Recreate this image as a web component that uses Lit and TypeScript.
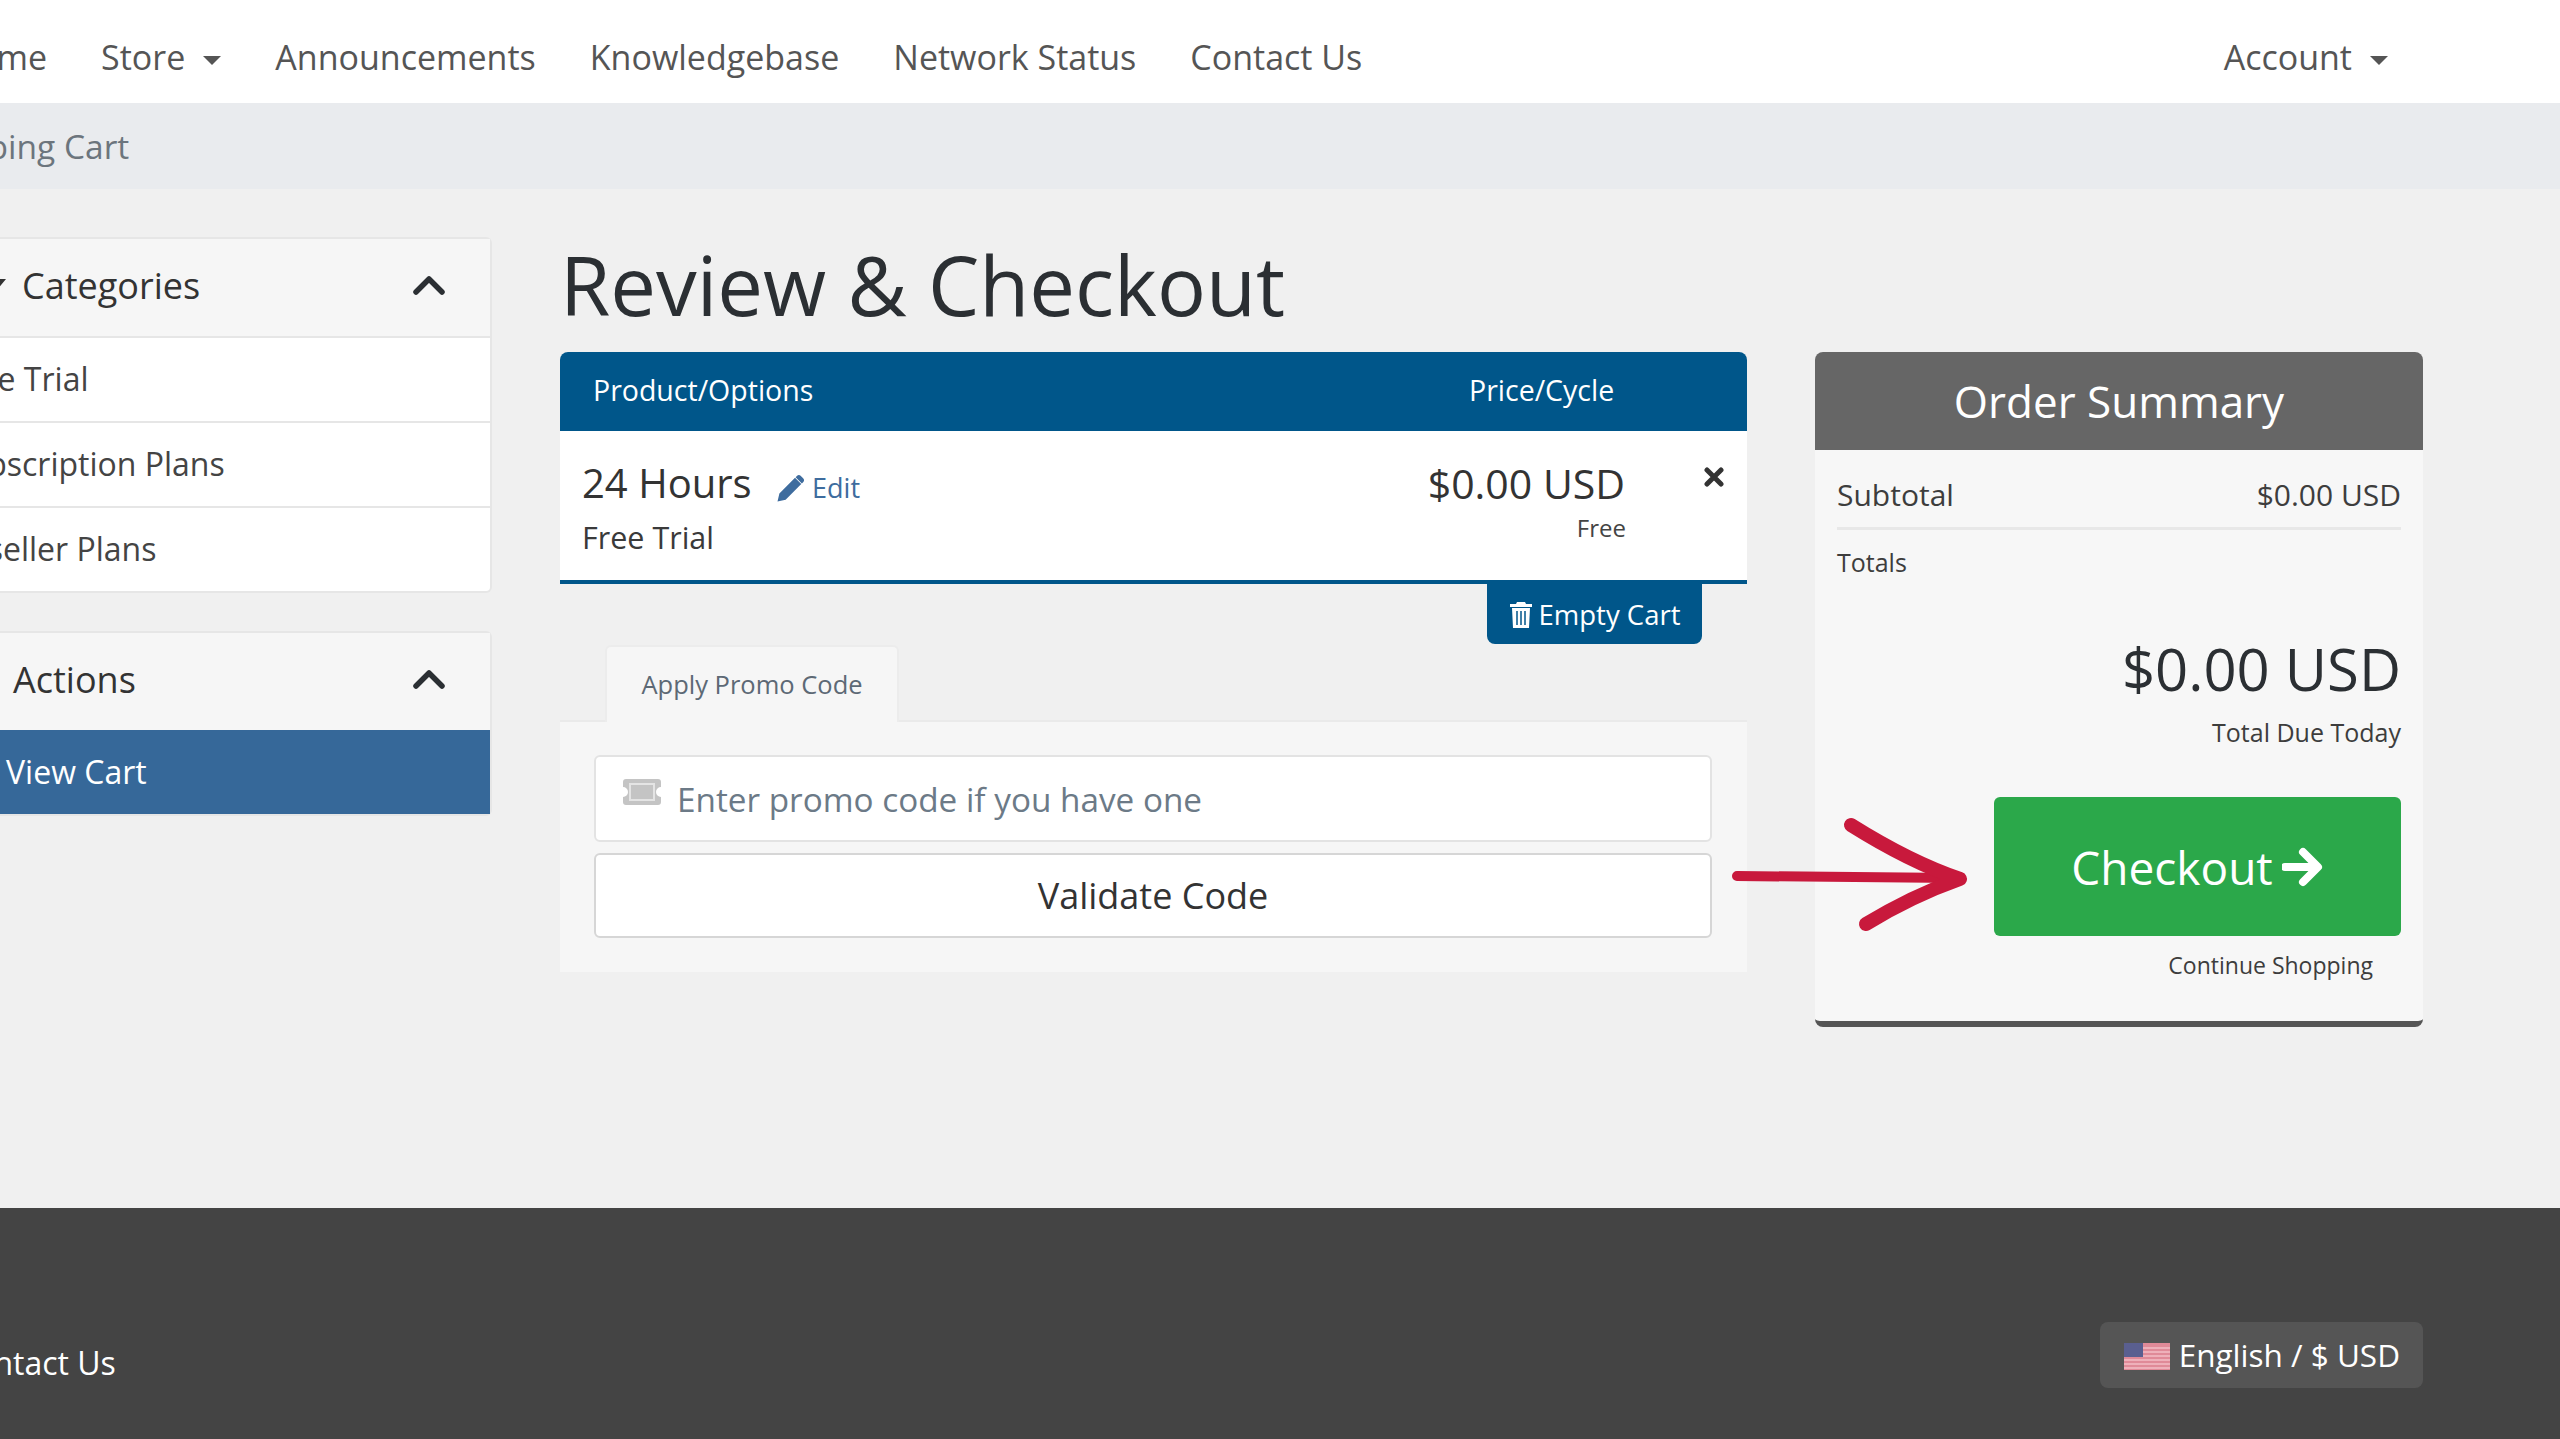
import { LitElement, html, css, svg } from "lit";
import { customElement } from "lit/decorators.js";

const chevron = html`<svg class="chev" viewBox="0 0 34 22"><path d="M4 18 L17 5 L30 18" fill="none" stroke="#2b2f33" stroke-width="5.5" stroke-linecap="round" stroke-linejoin="round"/></svg>`;

@customElement("app-root")
export class AppRoot extends LitElement {
  static styles = css`
    :host { display: block; width: 2560px; height: 1439px; overflow: hidden; background: #f0f0f0; font-family: "Open Sans", "Liberation Sans", sans-serif; color: #333; position: relative; }
    * { box-sizing: border-box; }
    .nav { height: 103px; background: #fff; display: flex; align-items: center; font-size: 34px; color: #555; padding-top: 10px; white-space: nowrap; }
    .nav-left { display: flex; gap: 54px; margin-left: -49px; flex: 1; }
    .nav-right { margin-right: 172px; }
    .caret { display: inline-block; margin-left: 18px; vertical-align: 5px; border-top: 9px solid #555; border-left: 9px solid transparent; border-right: 9px solid transparent; }
    .crumb { height: 86px; background: #e9ebee; display: flex; align-items: center; font-size: 33.5px; color: #6c757d; white-space: nowrap; }
    .crumb span { margin-left: -92px; }
    .content { height: 1019px; padding: 48px 137px 0 0; display: flex; align-items: flex-start; }
    .side { width: 492px; flex: none; margin-right: 68px; overflow: hidden; }
    .card { background: #fff; border: 2px solid #e6e6e6; border-left: none; border-radius: 0 6px 6px 0; margin-bottom: 38px; }
    .card-h { height: 97px; background: #f6f6f6; display: flex; align-items: center; justify-content: space-between; padding: 0 44px 4px 0; font-size: 36px; color: #333; white-space: nowrap; }
    .chev { width: 34px; height: 22px; margin-top: -2px; }
    .row { height: 85px; border-top: 2px solid #e6e6e6; display: flex; align-items: center; font-size: 32px; padding-bottom: 2px; color: #444; white-space: nowrap; }
    .row.active { background: #366899; color: #fff; border-top: none; height: 84px; font-weight: 500; }
    .main { width: 1187px; flex: none; margin-right: 68px; }
    h1 { margin: 0; height: 115px; padding-top: 1px; font-size: 81.5px; line-height: 94px; font-weight: 400; color: #2b2f33; white-space: nowrap; }
    .tbl { background: #fff; border-bottom: 4px solid #00568a; border-radius: 8px 8px 0 0; overflow: hidden; }
    .tbl-h { height: 79px; background: #00568a; color: #fff; display: grid; grid-template-columns: 1fr 278px; align-items: center; font-size: 28.5px; padding-bottom: 4px; }
    .tbl-h span:first-child { padding-left: 33px; }
    .tbl-b { height: 149px; display: grid; grid-template-columns: 1fr auto 122px; padding-left: 22px; }
    .name { padding-top: 27px; font-size: 40px; line-height: 50px; color: #333; }
    .edit { font-size: 27px; color: #3e6c9e; margin-left: 13px; }
    .edit svg { width: 30px; height: 30px; vertical-align: -6px; }
    .sub { font-size: 30.5px; line-height: 42px; margin-top: 3px; color: #3a3a3a; }
    .price { padding-top: 27px; text-align: right; font-size: 41px; line-height: 50px; color: #333; }
    .free { font-size: 24px; line-height: 34px; margin-top: 3px; color: #444; margin-right: -1px; }
    .x { padding-top: 36px; padding-left: 79px; }
    .x svg { width: 20px; height: 20px; display: block; }
    .empty-wrap { display: flex; justify-content: flex-end; padding-right: 45px; }
    .empty { width: 215px; height: 60px; background: #00568a; color: #fff; border-radius: 0 0 8px 8px; font-size: 27.5px; display: flex; align-items: center; justify-content: center; gap: 6px; white-space: nowrap; }
    .empty svg { width: 24px; height: 28px; }
    .tabs { padding: 1px 0 0 45px; height: 78px; border-bottom: 2px solid #eaeaea; }
    .tab { width: 294px; height: 78px; padding-bottom: 2px; background: #f6f6f6; border: 2px solid #ececec; border-bottom: none; border-radius: 6px 6px 0 0; display: flex; align-items: center; justify-content: center; font-size: 25.5px; color: #5d6975; white-space: nowrap; }
    .panel { height: 250px; background: #f6f6f6; padding: 33px 35px 0 34px; }
    .input { height: 87px; background: #fff; border: 2px solid #e3e3e3; border-radius: 6px; display: flex; align-items: center; padding-left: 27px; font-size: 33.3px; color: #6c7a87; white-space: nowrap; }
    .input svg { width: 38px; height: 26px; margin: -14px 16px 0 0; flex: none; }
    .btn { margin-top: 11px; height: 85px; background: #fff; border: 2px solid #d6d6d6; border-radius: 6px; display: flex; align-items: center; justify-content: center; font-size: 36px; color: #333; }
    .sum { width: 608px; flex: none; height: 675px; margin-top: 115px; background: #f7f7f7; border-bottom: 6px solid #555; border-radius: 8px; overflow: hidden; display: flex; flex-direction: column; }
    .sum-h { height: 98px; flex: none; background: #666; color: #fff; font-size: 44px; display: flex; align-items: center; justify-content: center; white-space: nowrap; }
    .sum-b { padding: 0 22px; flex: 1; display: flex; flex-direction: column; }
    .st { height: 80px; border-bottom: 3px solid #e8e8e8; display: flex; justify-content: space-between; align-items: center; font-size: 30px; color: #3d3d3d; padding-top: 12px; }
    .totals { font-size: 25px; line-height: 36px; margin-top: 14px; color: #3d3d3d; }
    .total { font-size: 58px; line-height: 70px; text-align: right; margin-top: 54px; color: #2b2f33; white-space: nowrap; }
    .due { font-size: 25px; line-height: 36px; text-align: right; margin-top: 10px; color: #3d3d3d; }
    .chk { width: 407px; height: 139px; align-self: flex-end; margin-top: 47px; background: #2ba84a; color: #fff; border-radius: 6px; font-size: 46px; display: flex; align-items: center; justify-content: center; gap: 9px; white-space: nowrap; }
    .chk svg { width: 42px; height: 42px; }
    .cont { font-size: 23px; line-height: 34px; text-align: right; margin: 12px 28px 0 0; color: #3d3d3d; }
    .foot { height: 231px; background: #444; display: flex; justify-content: space-between; align-items: flex-start; padding: 114px 137px 0 0; color: #fff; white-space: nowrap; }
    .foot-l { font-size: 32px; margin: 19px 0 0 -46px; }
    .lang { width: 323px; height: 66px; background: #555; border-radius: 8px; display: flex; align-items: center; justify-content: flex-end; padding: 0 23px 2px 0; gap: 9px; font-size: 31.5px; }
    .lang svg { width: 46px; height: 27px; margin-top: 5px; }
    .arrow { position: absolute; left: 1720px; top: 800px; width: 260px; height: 140px; pointer-events: none; }
  `;

  render() {
    return html`
      <div class="nav">
        <div class="nav-left">
          <span>Home</span>
          <span>Store<i class="caret"></i></span>
          <span>Announcements</span>
          <span>Knowledgebase</span>
          <span>Network Status</span>
          <span>Contact Us</span>
        </div>
        <div class="nav-right">Account<i class="caret"></i></div>
      </div>
      <div class="crumb"><span>Shopping Cart</span></div>
      <div class="content">
        <div class="side">
          <div class="card">
            <div class="card-h"><span style="margin-left:-18px"><svg width="26" height="28" viewBox="0 0 26 28" style="vertical-align:-4px;margin-right:14px"><path d="M2 4h22l-9 11v10l-4-3v-7z" fill="#333"/></svg>Categories</span>${chevron}</div>
            <div class="row"><span style="margin-left:-50px">Free Trial</span></div>
            <div class="row"><span style="margin-left:-50px">Subscription Plans</span></div>
            <div class="row"><span style="margin-left:-50px">Reseller Plans</span></div>
          </div>
          <div class="card">
            <div class="card-h"><span style="margin-left:13px">Actions</span>${chevron}</div>
            <div class="row active"><span style="margin-left:6px">View Cart</span></div>
          </div>
        </div>
        <div class="main">
          <h1>Review &amp; Checkout</h1>
          <div class="tbl">
            <div class="tbl-h"><span>Product/Options</span><span>Price/Cycle</span></div>
            <div class="tbl-b">
              <div>
                <div class="name">24 Hours <span class="edit"><svg viewBox="0 0 24 24"><path d="M2 22l1.5-6.5L16 3l5 5L8.5 20.5z M17.5 1.5c1-1 2.2-1 3.2 0l1.8 1.8c1 1 1 2.2 0 3.2l-1 1-5-5z" fill="#3e6c9e"/></svg> Edit</span></div>
                <div class="sub">Free Trial</div>
              </div>
              <div class="price">$0.00 USD<div class="free">Free</div></div>
              <div class="x"><svg viewBox="0 0 20 20"><path d="M3 3 L17 17 M17 3 L3 17" stroke="#333" stroke-width="5" stroke-linecap="round"/></svg></div>
            </div>
          </div>
          <div class="empty-wrap"><div class="empty"><svg viewBox="0 0 24 28"><path d="M8 2h8l1 2h6v3H1V4h6z M3 8h18l-1 20H4z" fill="#fff"/><path d="M8 11v14M12 11v14M16 11v14" stroke="#00568a" stroke-width="1.5"/></svg>Empty Cart</div></div>
          <div class="tabs"><div class="tab">Apply Promo Code</div></div>
          <div class="panel">
            <div class="input"><svg viewBox="0 0 38 26"><path d="M3 0h32a3 3 0 0 1 3 3v5a5 5 0 0 0 0 10v5a3 3 0 0 1-3 3H3a3 3 0 0 1-3-3v-5a5 5 0 0 0 0-10V3a3 3 0 0 1 3-3z" fill="#c4c4c4"/><rect x="7" y="5" width="24" height="16" fill="none" stroke="#e4e4e4" stroke-width="2"/></svg>Enter promo code if you have one</div>
            <div class="btn">Validate Code</div>
          </div>
        </div>
        <div class="sum">
          <div class="sum-h">Order Summary</div>
          <div class="sum-b">
            <div class="st"><span>Subtotal</span><span>$0.00 USD</span></div>
            <div class="totals">Totals</div>
            <div class="total">$0.00 USD</div>
            <div class="due">Total Due Today</div>
            <div class="chk">Checkout <svg viewBox="0 0 42 42"><path d="M3 21h32 M21 6l15 15-15 15" fill="none" stroke="#fff" stroke-width="8" stroke-linecap="round" stroke-linejoin="round"/></svg></div>
            <div class="cont">Continue Shopping</div>
          </div>
        </div>
      </div>
      <div class="foot">
        <div class="foot-l">Contact Us</div>
        <div class="lang"><svg viewBox="0 0 46 27">
          <rect width="46" height="27" fill="#e08a98"/>
          ${[4, 8, 12, 16, 20, 24].map((y) => svg`<rect y="${y}" width="46" height="2" fill="#eeb0ba"/>`)}
          <rect width="19" height="14" fill="#5a5f90"/>
        </svg>English / $ USD</div>
      </div>
      <svg class="arrow" viewBox="0 0 260 140">
        <path d="M17 76 L236 78" fill="none" stroke="#c8193c" stroke-width="10" stroke-linecap="round"/>
        <path d="M131 25 Q190 62 240 79 Q192 96 146 124" fill="none" stroke="#c8193c" stroke-width="14" stroke-linecap="round" stroke-linejoin="round"/>
      </svg>
    `;
  }
}
